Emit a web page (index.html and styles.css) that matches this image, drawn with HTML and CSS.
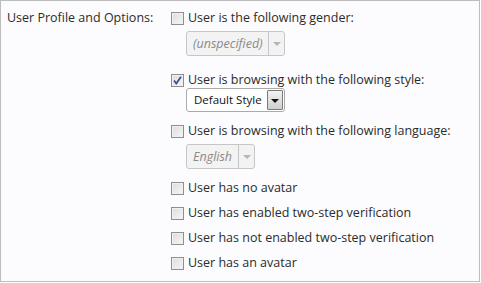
FILE: index.html
```html
<!DOCTYPE html>
<html lang="en">
<head>
  <meta charset="UTF-8">
  <title>User Criteria</title>
  <link rel="stylesheet" href="styles.css">
</head>
<body>
  <div class="panel">
    <dl class="ctrlUnit">
      <dt>User Profile and Options:</dt>
      <dd>
        <ul class="checkList">
          <li>
            <label class="check"><span class="box"></span>User is the following gender:</label>
            <div class="select disabled sel-gender">
              <span class="value">(unspecified)</span>
              <span class="arrow"></span>
            </div>
          </li>
          <li>
            <label class="check"><span class="box checked">
              <svg viewBox="0 0 13 13" width="13" height="13"><path d="M3 6.5 L5.3 9.5 L10 2.8" fill="none" stroke="#3e4f8a" stroke-width="1.8"/></svg>
            </span>User is browsing with the following style:</label>
            <div class="select native sel-style">
              <span class="value">Default Style</span>
              <span class="arrow"></span>
            </div>
          </li>
          <li>
            <label class="check"><span class="box"></span>User is browsing with the following language:</label>
            <div class="select disabled sel-lang">
              <span class="value">English</span>
              <span class="arrow"></span>
            </div>
          </li>
          <li class="plain"><label class="check"><span class="box"></span>User has no avatar</label></li>
          <li class="plain"><label class="check"><span class="box"></span>User has enabled two-step verification</label></li>
          <li class="plain"><label class="check"><span class="box"></span>User has not enabled two-step verification</label></li>
          <li class="plain"><label class="check"><span class="box"></span>User has an avatar</label></li>
        </ul>
      </dd>
    </dl>
  </div>
</body>
</html>
```

FILE: styles.css
```css
body {
  margin: 0;
  font-family: 'Open Sans', 'Noto Sans', Arial, sans-serif;
  font-size: 12.5px;
  color: #2b2b2b;
}
.panel {
  box-sizing: border-box;
  width: 480px;
  height: 282px;
  border: 1px solid #bdbdbd;
  background-color: #fcfcfe;
  padding-top: 9px;
}
.ctrlUnit {
  display: flex;
  margin: 0;
}
.ctrlUnit dt {
  width: 164px;
  padding-left: 6px;
  line-height: 16px;
}
.ctrlUnit dd {
  margin: 0;
  flex: 1;
}
.checkList {
  list-style: none;
  margin: 0;
  padding: 0;
}
.check {
  display: flex;
  align-items: center;
  height: 16px;
  line-height: 16px;
  white-space: nowrap;
}
.box {
  box-sizing: border-box;
  width: 13px;
  height: 13px;
  margin-right: 4px;
  border: 1px solid #8f8f8f;
  background: linear-gradient(135deg, #dcdcdc, #f6f6f6);
  box-shadow: inset 0 0 0 1px #f0f0f0;
  display: flex;
}
.box svg {
  margin: -1px;
}
.checkList li + li {
  margin-top: 16px;
}
.checkList li:nth-child(3) {
  margin-top: 11px;
}
.checkList li.plain {
  margin-top: 9px;
}
.checkList li:nth-child(4) {
  margin-top: 11px;
}
.select {
  box-sizing: border-box;
  display: flex;
  align-items: stretch;
  margin-left: 15px;
  margin-top: 5px;
  height: 25px;
  border: 1px solid #c6c6c6;
  border-radius: 3px;
  white-space: nowrap;
}
.select .value {
  flex: 1;
  padding-left: 6px;
  line-height: 23px;
  overflow: hidden;
}
.select .arrow {
  width: 15px;
  border-left: 1px solid #c6c6c6;
  position: relative;
}
.select .arrow::after {
  content: '';
  position: absolute;
  left: 4px;
  top: 10px;
  border-left: 4px solid transparent;
  border-right: 4px solid transparent;
  border-top: 4px solid #b5b5b5;
}
.disabled {
  background-color: #f3f3f3;
  color: #8a8a8a;
  font-style: italic;
}
.sel-gender {
  width: 99px;
}
.sel-lang {
  width: 69px;
}
.native {
  width: 99px;
  height: 24px;
  margin-top: 0;
  background-color: #fff;
  border-color: #aaaaaa;
  color: #111;
  font-size: 11.5px;
}
.native .value {
  padding-left: 7px;
  line-height: 22px;
}
.native .arrow {
  margin: 1px;
  width: 14px;
  border: 1px solid #7a7a7a;
  border-radius: 1px;
  background: linear-gradient(#f2f2f2, #cfcfcf);
}
.native .arrow::after {
  left: 3px;
  top: 8px;
  border-top-color: #111;
}
```
